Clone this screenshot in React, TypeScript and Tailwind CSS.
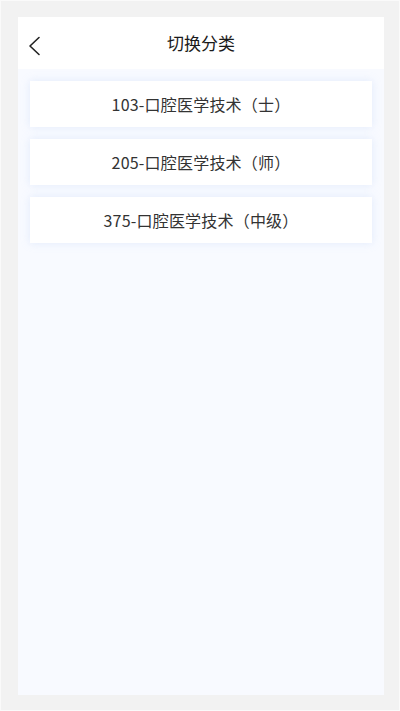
const categories = ['103-口腔医学技术（士）', '205-口腔医学技术（师）', '375-口腔医学技术（中级）']

export default function App() {
  return (
    <div
      className="flex h-[711px] w-[400px] flex-col border border-[#fafafa] bg-[#f2f2f2] pb-[15px] pl-[17px] pr-[15px] pt-[16px]"
      style={{ fontFamily: '"Noto Sans CJK SC", "Noto Sans", sans-serif' }}
    >
      <div className="flex flex-1 flex-col">
        <header className="relative flex h-[52px] items-center justify-center bg-white">
          <button className="absolute left-[9px] top-[19px] text-[#222]" aria-label="back">
            <svg width="14" height="20" viewBox="0 0 14 20" fill="none">
              <path d="M12 1.5 L3 10 L12 18.5" stroke="currentColor" strokeWidth="1.6" strokeLinecap="round" strokeLinejoin="round" />
            </svg>
          </button>
          <h1 className="text-[17px] text-[#1a1a1a]">切换分类</h1>
        </header>

        <main className="flex flex-1 flex-col gap-3 bg-[#f8faff] px-3 pt-3">
          {categories.map((name) => (
            <div
              key={name}
              className="flex h-[46px] items-center justify-center bg-white text-[16px] tracking-[0.2px] text-[#333] shadow-[0_0_8px_rgba(215,228,250,0.7)]"
            >
              {name}
            </div>
          ))}
        </main>
      </div>
    </div>
  )
}
